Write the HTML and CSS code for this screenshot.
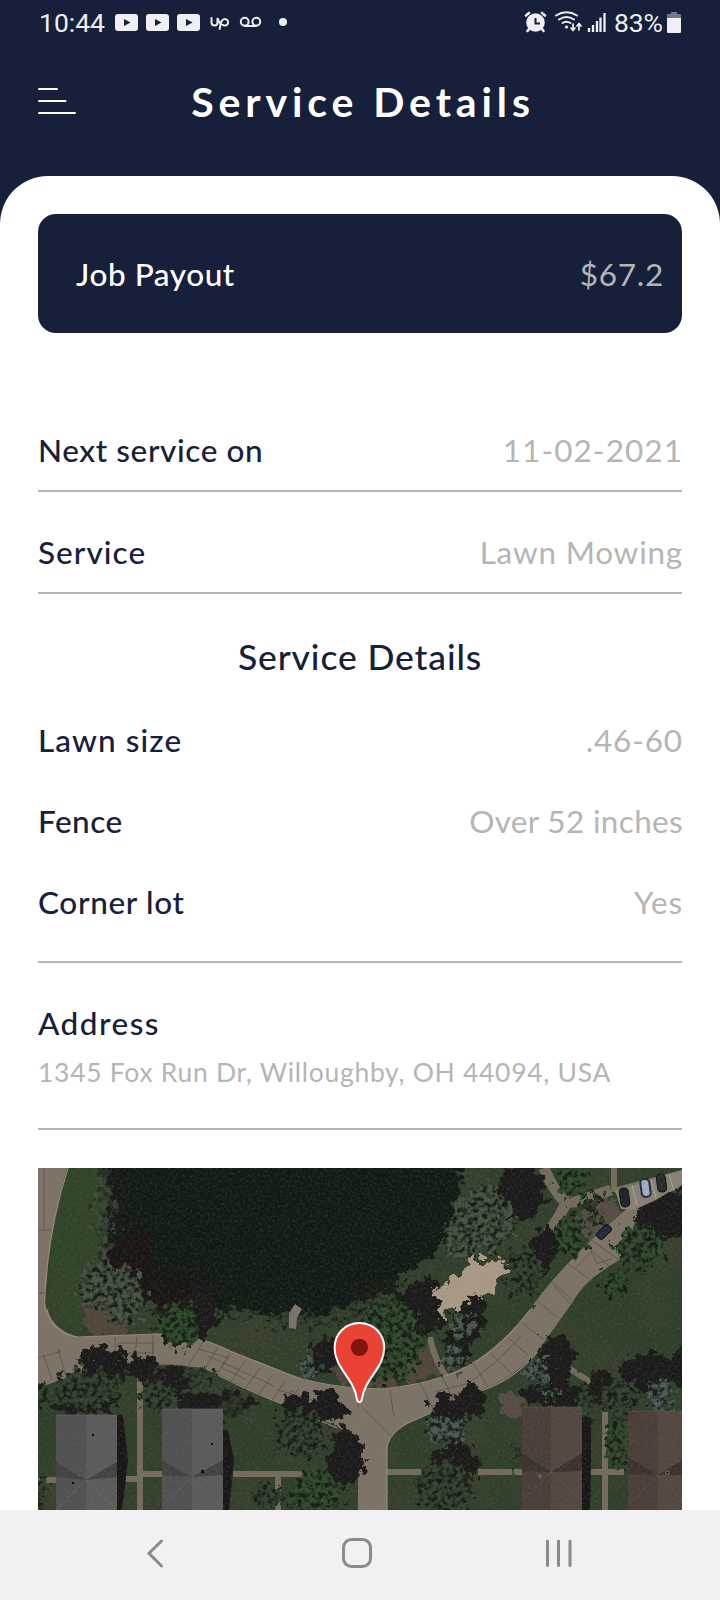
FILE: index.html
```html
<!DOCTYPE html>
<html lang="en">
<head>
<meta charset="utf-8">
<title>Service Details</title>
<link rel="stylesheet" href="styles.css">
</head>
<body>
<div class="screen">
  <div class="status">
    <span class="clock">10:44</span>
    <svg class="status-left" width="180" height="26" viewBox="112 9 180 26" aria-hidden="true">
      <g fill="#eeeef3"><rect x="115" y="14" width="23" height="17" rx="3"/><rect x="146" y="14" width="23" height="17" rx="3"/><rect x="177" y="14" width="23" height="17" rx="3"/></g>
      <path fill="#17203a" d="M124 19l6.500 3.500-6.500 3.500zM155 19l6.500 3.500-6.500 3.500zM186 19l6.500 3.500-6.500 3.500z"/>
      <g fill="none" stroke="#eeeef3" stroke-width="2" stroke-linecap="round">
        <path d="M211.500 18v4.500q0 3 3 3t3-3v-4.500q1.500 5 4 6.500M219.700 29q1-10 5-10a3.300 3.300 0 1 1-2 5.800"/>
        <circle cx="244.700" cy="21.700" r="3.900"/><circle cx="256.300" cy="21.700" r="3.900"/><path d="M244.700 26h11.600"/>
      </g>
      <circle cx="283" cy="22" r="4" fill="#eeeef3"/>
    </svg>
    <svg class="status-right" width="86" height="26" viewBox="522 9 86 26" aria-hidden="true">
      <g fill="none" stroke="#eeeef3" stroke-linecap="round">
        <path stroke-width="2.600" d="M526 15.500l3-2.500M545 15.500l-3-2.500M529 29l-1.500 2M542 29l1.500 2"/>
        <g stroke-width="2"><path d="M556 15.500q10.500-6.500 21 0M559 19.500q7.500-5 15 0M562.500 23q4-2.700 8 0"/><path d="M573 24v6m-2-2 2 2.500 2-2.500M579 30v-6m-2 2 2-2.500 2 2.500" stroke-width="1.700"/></g>
        <path stroke-width="2.300" stroke-linecap="butt" d="M589 32v-4M593 32v-7M597 32V21M600.500 32V17.500M604.500 32V13"/>
      </g>
      <circle cx="535.500" cy="22.500" r="9.300" fill="#eeeef3"/><path d="M535.500 18v5.500h4.500" fill="none" stroke="#17203a" stroke-width="2"/>
      <circle cx="566.500" cy="27" r="1.600" fill="#eeeef3"/>
    </svg>
    <span class="percent">83%</span>
    <svg class="battery" width="14" height="21" viewBox="0 0 14 21" aria-hidden="true"><path fill="#747988" d="M4 0h6v2h3q1 0 1 1v4H0V3q0-1 1-1h3z"/><path fill="#eeeef3" d="M0 6h14v14q0 1-1 1H1q-1 0-1-1z"/></svg>
  </div>
  <header class="header">
    <svg class="menu" width="38" height="28" viewBox="0 0 38 28" fill="none" stroke="#fff" stroke-width="2" stroke-linecap="round" aria-hidden="true"><path d="M1 2h18M1 14h26.500M1 26h36"/></svg>
    <h1 class="title">Service Details</h1>
  </header>
  <main class="sheet">
    <section class="payout"><span class="t-job">Job Payout</span><span class="value t-price">$67.2</span></section>
    <div class="row first"><span class="t-next">Next service on</span><span class="value t-date">11-02-2021</span></div>
    <div class="row"><span class="t-service">Service</span><span class="value t-mow">Lawn Mowing</span></div>
    <h2 class="subtitle">Service Details</h2>
    <section class="details">
      <div class="detail"><span class="t-lawn">Lawn size</span><span class="value t-size">.46-60</span></div>
      <div class="detail"><span class="t-fence">Fence</span><span class="value t-over">Over 52 inches</span></div>
      <div class="detail"><span class="t-corner">Corner lot</span><span class="value t-yes">Yes</span></div>
    </section>
    <section class="address"><div><span class="t-address">Address</span></div><p class="street">1345 Fox Run Dr, Willoughby, OH 44094, USA</p></section>
    <svg class="map" width="644" height="342" viewBox="0 0 644 342" role="img" aria-label="Satellite map">
      <defs>
        <filter id="leaf" x="-10%" y="-10%" width="120%" height="120%">
          <feTurbulence type="fractalNoise" baseFrequency=".12" numOctaves="4" seed="4" result="n"/>
          <feDisplacementMap in="SourceGraphic" in2="n" scale="32" xChannelSelector="R" yChannelSelector="G" result="d"/>
          <feTurbulence type="fractalNoise" baseFrequency=".2" numOctaves="3" seed="9"/>
          <feColorMatrix values="0 0 0 0 .08  0 0 0 0 .1  0 0 0 0 .08  4 0 0 0 -1.700" result="s"/>
          <feComposite in="s" in2="d" operator="in" result="c"/>
          <feMerge result="m"><feMergeNode in="d"/><feMergeNode in="c"/></feMerge>
          <feGaussianBlur in="m" stdDeviation=".5"/>
        </filter>
        <filter id="rough" x="-10%" y="-10%" width="120%" height="120%"><feTurbulence type="fractalNoise" baseFrequency=".1" numOctaves="4" seed="2"/><feDisplacementMap in="SourceGraphic" scale="24" xChannelSelector="R" yChannelSelector="G"/><feGaussianBlur stdDeviation=".6"/></filter>
        <filter id="grain" x="0" y="0" width="100%" height="100%"><feTurbulence type="fractalNoise" baseFrequency=".4" numOctaves="2" seed="7"/><feColorMatrix values="0 0 0 0 .5  0 0 0 0 .48  0 0 0 0 .42  1 0 0 0 -.42"/></filter>
        <filter id="patch" x="0" y="0" width="100%" height="100%"><feTurbulence type="fractalNoise" baseFrequency=".02" numOctaves="3" seed="3"/><feColorMatrix values="0 0 0 0 .28  0 0 0 0 .26  0 0 0 0 .2  2 0 0 0 -.8"/></filter>
      </defs>
      <rect width="644" height="342" fill="#2e3f2a"/>
      <rect width="644" height="342" filter="url(#patch)" opacity=".5"/>
      <path fill="#2f4428" d="M30 0h40l-10 80-10 65-5 20-27-10-8-30 4-65z"/>
      <!-- pond -->
      <g filter="url(#rough)"><path fill="#121a15" d="M67 -22H427L420 30 405 75 385 98 355 115 323 134 278 150 225 146 180 141 145 143 112 137 92 120 67 92 70 50z"/><path fill="#1c1416" d="M65 75l45-15 15 50 50 0 5 25-15 30-30-4-20-26-30-15z" opacity=".75"/></g>
      <!-- sandy ground -->
      <g filter="url(#rough)"><path fill="#50463a" d="M44 141l25-3 22 12-4 17-31 4-10-14zM392 172l14 33-60 17-44-5-7-18 55-9z"/><path fill="#554d43" d="M535 50l22-22 22 2 8 20-18 16-14 11-12-12zM460 226l18-1 12 16-8 11-15-5z"/></g>
      <!-- paths and drives -->
      <g fill="none" stroke="#746c5d" stroke-linecap="butt">
        <path stroke-width="11" d="M506 0q9 22 21 34h10l36-12M510 65q11-15 19-31"/>
        <path stroke-width="6" d="M392 169q5 27 20 44M532 201l22 14M576 0v24"/>
        <path stroke-width="6" d="M102 210v132M105 306h20M0 312h18M88 311h13M195 306h70M240 308v34M349 304h34M440 304h44M553 304h33M567 244v98"/>
      </g>
      <path fill="#7d7467" d="M0 0h29Q15 48 10 95L7 135Q12 160 39 169L118 166Q158 166 192 183L250 206Q290 222 350 221 408 214 440 192 468 174 491 143 510 114 550 75L593 37 583 34 575 20 644 2V18L618 32 600 46 595 60Q594 83 580 93 546 112 534 135L500 183Q477 210 440 223L370 255Q351 264 349 280V342H320V285Q315 268 299 258L240 234Q205 219 182 207 151 194 117 197L67 196 0 220z"/>
      <path fill="none" stroke="#958b7a" stroke-width="1.200" d="M30 0Q14 50 9 100T9 142Q14 165 40 169L118 166Q160 166 192 183L250 206Q285 220 345 221 405 215 440 192 468 173 492 142M180 207Q210 223 250 238L299 260M349 342V280Q350 266 370 255L440 224Q480 210 500 183"/>
      <path fill="none" stroke="#4c463d" stroke-width=".8" opacity=".75" d="M6 0v60M0 62h13M0 125h8M0 190l24-7M5 186l9 26M20 180l7 25M77 169v26M99 169l-3 26M115 167v30M80 175h35v10H80M165 174l-17 27M180 179l-15 25M192 185l-15 24M207 193l-17 25M222 200l-18 25M235 206l-18 26M247 213l-16 24M260 221l-15 23M161 181l30 9-8 9 24 12M170 188l66 30M240 222l34 10M285 221v29M320 222v17M352 222l4 27M382 215l15 29M405 209l10 24M435 195l15 24M452 185l21 20M470 170l20 17M483 154l23 18M498 132l21 17M512 112l22 20M529 95l22 16M548 78l23 20M553 72l31 22M397 224l34-9 27-21 26-27M516 118l16 18M538 100l15-16 6 12 16-6M326 241l30 30"/>
      <!-- tree shade -->
      <g filter="url(#rough)" fill="#191a19">
        <ellipse cx="72" cy="25" rx="9" ry="58" opacity=".5"/><ellipse cx="163" cy="143" rx="17" ry="26"/><ellipse cx="66" cy="198" rx="25" ry="19"/><ellipse cx="103" cy="200" rx="15" ry="13"/><ellipse cx="134" cy="213" rx="20" ry="17"/><ellipse cx="178" cy="236" rx="40" ry="12"/><ellipse cx="287" cy="186" rx="15" ry="17"/><ellipse cx="260" cy="243" rx="19" ry="18"/><ellipse cx="291" cy="240" rx="17" ry="16"/><ellipse cx="308" cy="289" rx="20" ry="28"/><ellipse cx="408" cy="247" rx="18" ry="22"/><ellipse cx="432" cy="233" rx="15" ry="17"/><ellipse cx="418" cy="298" rx="23" ry="27"/><ellipse cx="431" cy="148" rx="17" ry="26"/><ellipse cx="421" cy="178" rx="14" ry="18"/><ellipse cx="483" cy="25" rx="24" ry="28"/><ellipse cx="507" cy="80" rx="13" ry="25"/><ellipse cx="518" cy="193" rx="19" ry="27"/><ellipse cx="519" cy="228" rx="36" ry="12"/><ellipse cx="626" cy="46" rx="30" ry="27"/><ellipse cx="610" cy="206" rx="27" ry="21"/><ellipse cx="566" cy="220" rx="16" ry="16"/><ellipse cx="644" cy="200" rx="10" ry="19"/><ellipse cx="387" cy="137" rx="22" ry="28"/><ellipse cx="345" cy="127" rx="30" ry="9"/><ellipse cx="45" cy="238" rx="35" ry="9"/>
      </g>
      <!-- canopies -->
      <g filter="url(#leaf)">
        <g fill="#475341"><ellipse cx="64" cy="118" rx="22" ry="25"/><ellipse cx="87" cy="127" rx="19" ry="29"/><ellipse cx="446" cy="52" rx="30" ry="34"/><ellipse cx="425" cy="68" rx="20" ry="24"/><ellipse cx="66" cy="53" rx="8" ry="45" opacity=".6"/></g>
        <g fill="#2e4b2a"><ellipse cx="141" cy="158" rx="22" ry="21"/><ellipse cx="350" cy="172" rx="34" ry="42"/><ellipse cx="602" cy="80" rx="24" ry="23"/><ellipse cx="576" cy="114" rx="15" ry="14"/><ellipse cx="581" cy="273" rx="13" ry="26"/><ellipse cx="277" cy="327" rx="27" ry="22"/><ellipse cx="532" cy="67" rx="14" ry="21"/><ellipse cx="534" cy="14" rx="15" ry="15"/></g>
        <g fill="#33422f"><ellipse cx="50" cy="221" rx="34" ry="19"/><ellipse cx="120" cy="227" rx="16" ry="18"/><ellipse cx="162" cy="209" rx="17" ry="11" opacity=".8"/><ellipse cx="194" cy="240" rx="12" ry="12" opacity=".7"/><ellipse cx="262" cy="266" rx="26" ry="22"/><ellipse cx="484" cy="106" rx="20" ry="26"/><ellipse cx="408" cy="319" rx="29" ry="26"/><ellipse cx="582" cy="231" rx="19" ry="17"/><ellipse cx="548" cy="235" rx="9" ry="18"/><ellipse cx="230" cy="329" rx="16" ry="14"/><ellipse cx="2" cy="326" rx="9" ry="20"/><ellipse cx="5" cy="229" rx="7" ry="14"/><ellipse cx="478" cy="290" rx="5" ry="18" opacity=".6"/></g>
        <g fill="#4b5b53"><ellipse cx="271" cy="201" rx="9" ry="12"/><ellipse cx="424" cy="159" rx="12" ry="13"/><ellipse cx="414" cy="191" rx="12" ry="11"/><ellipse cx="406" cy="262" rx="20" ry="14"/><ellipse cx="500" cy="204" rx="13" ry="13"/><ellipse cx="513" cy="227" rx="9" ry="7"/><ellipse cx="622" cy="228" rx="14" ry="17"/></g>
        <path fill="#33432e" d="M182 143l45 4 57 2 40-14 25-16v12l-42 28-75-3-50-7z" opacity=".8"/>
        <g fill="#2b3d27"><circle cx="551" cy="36" r="8"/><circle cx="565" cy="28" r="6"/><circle cx="549" cy="53" r="4"/><circle cx="560" cy="52" r="6"/></g>
      </g>
      <g filter="url(#rough)"><path fill="#a99b87" d="M396 121l24-13 12-17 33 0 3 9-20 26-16 4-13 12-17 6z"/></g>
      <!-- roofs and their shade -->
      <path fill="#181517" d="M79 247h6l5 45-6 50h-8zM184 262h6l6 30-5 50h-9zM544 249h9v45l-1 48h-8z"/>
      <g><path fill="#505152" d="M18 247h61v95H18zM124 241h61v101h-61z"/><path fill="#5b5b5b" d="M48 247h31v95H48zM154 241h31v101h-31z"/><path fill="#424341" d="M18 294l30 18-30-3zM79 294l-31 18 31-3zM124 292l30 17-30-2zM185 292l-31 17 31-2z"/><path fill="none" stroke="#696967" stroke-width=".7" d="M18 342l30-30 31 30M124 338l30-29 31 30M18 247h61M124 241h61"/></g>
      <g><path fill="#493e38" d="M484 239h60v103h-60zM590 243h54v99h-54z"/><path fill="#534740" d="M513 239h31v103h-31zM620 243h24v99h-24z"/><path fill="#3b322e" d="M484 285l29 19-29-1zM544 285l-31 19 31-1zM590 289l30 18-30-1zM644 292l-24 15h24z"/><path fill="none" stroke="#62534a" stroke-width=".7" d="M484 333l29-29 31 29M590 337l30-30 24 25M484 239h60M590 243h54"/></g>
      <path fill="#0c0b0b" d="M163 302h3v3h-3zM173 275h2v2h-2zM54 266h2v2h-2zM34 314h2v2h-2z"/><path fill="#0c0b0b" stroke="#b0aba1" stroke-width=".6" d="M501 307h2v2h-2zM628 303h3v3h-3z"/>
      <path fill="#7d7467" d="M251 160v-15l6-9 7 5-5 9-1 11z"/>
      <!-- cars -->
      <path fill="#8a8274" d="M577 23L644 2v14l-26 16-22 10-13-1z"/>
      <g stroke="#0d1015" stroke-width="1"><rect x="582" y="20" width="9" height="19" rx="4" fill="#20232a" transform="rotate(-8 586 29)"/><rect x="603" y="11" width="9" height="18" rx="4" fill="#9fb0c3" stroke="#202c40" stroke-width="2" transform="rotate(-8 607 20)"/><rect x="619" y="6" width="9" height="18" rx="4" fill="#292b2b" transform="rotate(-8 624 15)"/><rect x="558" y="60" width="16" height="8" rx="3" fill="#202941" transform="rotate(-44 566 64)"/></g>
      <path fill="none" stroke="#b7b0a2" stroke-width=".8" d="M594 17l5 20M613 12l5 18M631 6l5 17"/>
      <rect width="644" height="342" filter="url(#grain)" opacity=".5"/>
      <!-- marker -->
      <path fill="#ea4335" stroke="#fff" stroke-width="2" d="M321.400 155c-14.300 0-24.800 11-24.800 25 0 20 19.800 31 22.300 51 .4 4 4.600 4 5 0 2.500-20 22.300-31 22.300-51 0-14-10.500-25-24.800-25z"/><circle cx="321.400" cy="179.300" r="8.600" fill="#811411"/>
    </svg>
  </main>
  <nav class="nav" aria-label="System navigation">
    <svg width="30" height="30" viewBox="0 0 30 30"><path d="M21.500 3L9 15.300 21.500 28"/></svg>
    <svg width="30" height="30" viewBox="0 0 30 30"><rect x="1.500" y="1.500" width="27" height="27" rx="8"/></svg>
    <svg width="30" height="30" viewBox="0 0 30 30"><path d="M3.500 3v24.500M14.500 3v24.500M26 3v24.500"/></svg>
  </nav>
</div>
</body>
</html>
```
FILE: styles.css
```css
* { box-sizing: border-box; }
body { margin: 0; font-family: Lato, "Open Sans", sans-serif; background: #fff; }
.screen { width: 720px; height: 1600px; overflow: hidden; display: flex; flex-direction: column; background: linear-gradient(#17203a 300px, #fff 300px); }
.status { display: flex; align-items: flex-start; height: 46px; padding: 9px 39px 0; font: 26.500px/28px Roboto, sans-serif; color: #eeeef3; }
.clock { width: 73px; }
.status-right { margin-left: 230px; }
.percent { width: 53px; padding-left: 6px; letter-spacing: -.2px; }
.battery { margin: 3px 0 0 auto; }
.header { height: 130px; padding: 26px 38px 0; display: grid; grid-template-columns: 38px 1fr 38px; align-items: start; }
.menu { margin-top: 15px; }
.title { margin: 4px 0 0; padding-left: 6px; text-align: center; font-size: 41px; line-height: 52px; font-weight: 700; letter-spacing: 4.900px; color: #fff; white-space: nowrap; }
.sheet { height: 1334px; padding: 38px 38px 0; border-radius: 48px 48px 0 0; background: #fff; color: #17203a; font-size: 31.500px; line-height: 40px; font-weight: 500; }
.payout, .row, .detail { display: flex; justify-content: space-between; white-space: nowrap; }
.payout { height: 119px; padding: 40px 19px 0 38px; border-radius: 18px; background: #17203a; color: #fff; }
.value { font-weight: 400; color: #b5b5b5; margin-right: -1px; }
.row { height: 102px; padding-top: 40px; border-bottom: 2px solid #b5b5b5; }
.row.first { margin-top: 57px; }
.subtitle { margin: 41px 0 41px; text-align: center; font-size: 35.500px; line-height: 44px; font-weight: 500; letter-spacing: .870px; }
.details { display: flex; flex-direction: column; gap: 41px; height: 243px; border-bottom: 2px solid #b5b5b5; }
.address { height: 167px; padding-top: 40px; border-bottom: 2px solid #b5b5b5; }
.street { margin: 13px 0 0; font-size: 26.500px; line-height: 32px; font-weight: 400; letter-spacing: .700px; color: #b5b5b5; white-space: nowrap; }
.t-job { letter-spacing: .570px; }
.t-price { letter-spacing: .750px; }
.t-next { letter-spacing: .600px; }
.t-date { letter-spacing: 1.070px; }
.t-service { letter-spacing: 1.050px; }
.t-mow { letter-spacing: .780px; }
.t-lawn { letter-spacing: 1.100px; }
.t-size { letter-spacing: .850px; }
.t-fence { letter-spacing: .500px; }
.t-over { letter-spacing: .340px; }
.t-corner { letter-spacing: .680px; }
.t-yes { letter-spacing: .800px; }
.t-address { letter-spacing: 1.500px; }
.map { display: block; margin-top: 38px; }
.map filter { color-interpolation-filters: sRGB; }
.map feTurbulence, .map feDisplacementMap, .map feColorMatrix, .map feComposite, .map feGaussianBlur, .map feMerge { color-interpolation-filters: sRGB; }
.nav { height: 90px; padding: 28px 146px 0 140px; display: flex; justify-content: space-between; background: #f1f1f1; }
.nav svg { fill: none; stroke: #8b8b8b; stroke-width: 3; stroke-linecap: round; }
```
